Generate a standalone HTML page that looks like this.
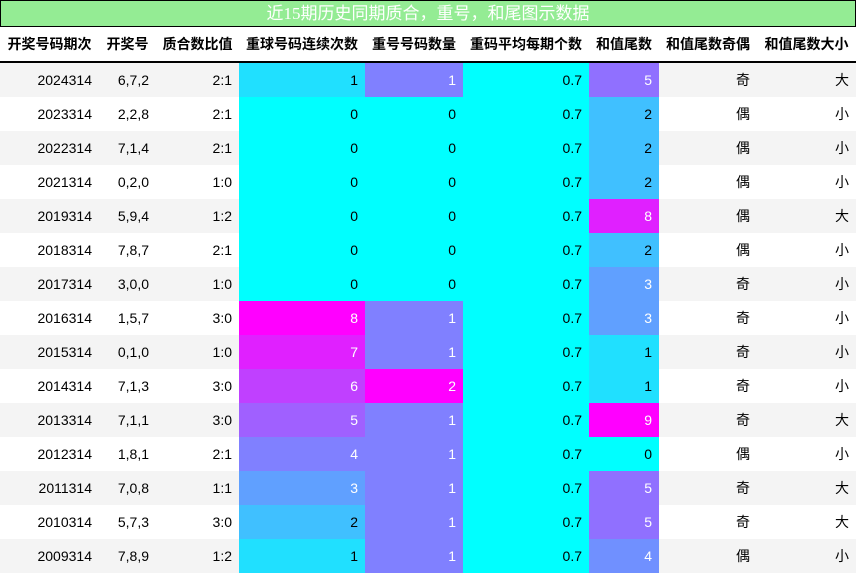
<!DOCTYPE html>
<html><head><meta charset="utf-8"><style>
body{margin:0;width:856px;height:574px;overflow:hidden;background:#fff;font-family:"Liberation Sans","Noto Sans CJK SC",sans-serif;}
.t{position:absolute;left:0;top:0;width:854px;height:25px;background:#94ec94;border:1px solid #000;color:#fff;font-size:17px;line-height:25px;text-align:center;font-family:"Liberation Serif","Noto Sans CJK SC",sans-serif;}
table{position:absolute;left:0;top:27px;border-collapse:collapse;table-layout:fixed;width:856px;}
th{height:34px;font-size:14px;font-weight:bold;padding:0;text-align:center;border-bottom:2px solid #000;}
td{height:34px;font-size:14px;padding:0 7px 0 0;text-align:right;}
tr:nth-child(even) td{background:#f4f4f4}
tr:nth-child(odd) td{background:#fff}
td.c0{background:#00ffff!important;color:#000}
td.c1{background:#20e0ff!important;color:#000}
td.c2{background:#40c0ff!important;color:#000}
td.c3{background:#60a0ff!important;color:#fff}
td.c4{background:#8080ff!important;color:#fff}
td.c5{background:#a060ff!important;color:#fff}
td.c6{background:#c040ff!important;color:#fff}
td.c7{background:#e020ff!important;color:#fff}
td.c8{background:#ff00ff!important;color:#fff}
td.m5{background:#9070ff!important;color:#fff}
td.m4{background:#7090ff!important;color:#fff}
</style></head><body>
<div class="t">近15期历史同期质合，重号，和尾图示数据</div>
<table>
<colgroup><col style="width:99px"><col style="width:57px"><col style="width:83px"><col style="width:126px"><col style="width:98px"><col style="width:126px"><col style="width:70px"><col style="width:98px"><col style="width:99px"></colgroup>
<tr><th>开奖号码期次</th><th>开奖号</th><th>质合数比值</th><th>重球号码连续次数</th><th>重号号码数量</th><th>重码平均每期个数</th><th>和值尾数</th><th>和值尾数奇偶</th><th>和值尾数大小</th></tr>
<tr><td>2024314</td><td>6,7,2</td><td>2:1</td><td class="c1">1</td><td class="c4">1</td><td class="c0">0.7</td><td class="m5">5</td><td>奇</td><td>大</td></tr>
<tr><td>2023314</td><td>2,2,8</td><td>2:1</td><td class="c0">0</td><td class="c0">0</td><td class="c0">0.7</td><td class="c2">2</td><td>偶</td><td>小</td></tr>
<tr><td>2022314</td><td>7,1,4</td><td>2:1</td><td class="c0">0</td><td class="c0">0</td><td class="c0">0.7</td><td class="c2">2</td><td>偶</td><td>小</td></tr>
<tr><td>2021314</td><td>0,2,0</td><td>1:0</td><td class="c0">0</td><td class="c0">0</td><td class="c0">0.7</td><td class="c2">2</td><td>偶</td><td>小</td></tr>
<tr><td>2019314</td><td>5,9,4</td><td>1:2</td><td class="c0">0</td><td class="c0">0</td><td class="c0">0.7</td><td class="c7">8</td><td>偶</td><td>大</td></tr>
<tr><td>2018314</td><td>7,8,7</td><td>2:1</td><td class="c0">0</td><td class="c0">0</td><td class="c0">0.7</td><td class="c2">2</td><td>偶</td><td>小</td></tr>
<tr><td>2017314</td><td>3,0,0</td><td>1:0</td><td class="c0">0</td><td class="c0">0</td><td class="c0">0.7</td><td class="c3">3</td><td>奇</td><td>小</td></tr>
<tr><td>2016314</td><td>1,5,7</td><td>3:0</td><td class="c8">8</td><td class="c4">1</td><td class="c0">0.7</td><td class="c3">3</td><td>奇</td><td>小</td></tr>
<tr><td>2015314</td><td>0,1,0</td><td>1:0</td><td class="c7">7</td><td class="c4">1</td><td class="c0">0.7</td><td class="c1">1</td><td>奇</td><td>小</td></tr>
<tr><td>2014314</td><td>7,1,3</td><td>3:0</td><td class="c6">6</td><td class="c8">2</td><td class="c0">0.7</td><td class="c1">1</td><td>奇</td><td>小</td></tr>
<tr><td>2013314</td><td>7,1,1</td><td>3:0</td><td class="c5">5</td><td class="c4">1</td><td class="c0">0.7</td><td class="c8">9</td><td>奇</td><td>大</td></tr>
<tr><td>2012314</td><td>1,8,1</td><td>2:1</td><td class="c4">4</td><td class="c4">1</td><td class="c0">0.7</td><td class="c0">0</td><td>偶</td><td>小</td></tr>
<tr><td>2011314</td><td>7,0,8</td><td>1:1</td><td class="c3">3</td><td class="c4">1</td><td class="c0">0.7</td><td class="m5">5</td><td>奇</td><td>大</td></tr>
<tr><td>2010314</td><td>5,7,3</td><td>3:0</td><td class="c2">2</td><td class="c4">1</td><td class="c0">0.7</td><td class="m5">5</td><td>奇</td><td>大</td></tr>
<tr><td>2009314</td><td>7,8,9</td><td>1:2</td><td class="c1">1</td><td class="c4">1</td><td class="c0">0.7</td><td class="m4">4</td><td>偶</td><td>小</td></tr>
</table>
</body></html>
